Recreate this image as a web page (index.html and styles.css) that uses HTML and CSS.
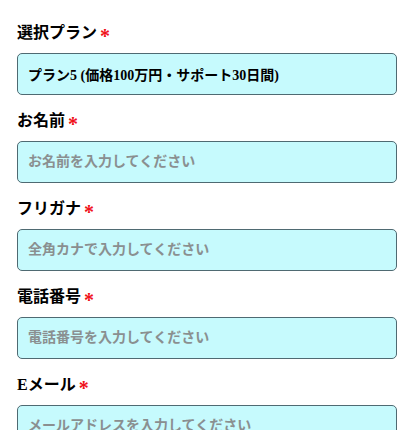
FILE: index.html
```html
<!DOCTYPE html>
<html lang="ja">
<head>
    <meta charset="UTF-8">
    <meta name="viewport" content="width=device-width, initial-scale=1.0">
    <title>お申し込みフォーム</title>
    <link rel="stylesheet" href="styles.css">
</head>
<body>
    <form class="entry-form">
        <div class="field">
            <label class="field-label" for="plan">選択プラン<span class="req">*</span></label>
            <div class="field-box field-value" id="plan">プラン5 (価格100万円・サポート30日間)</div>
        </div>

        <div class="field">
            <label class="field-label" for="name">お名前<span class="req">*</span></label>
            <input class="field-box" type="text" id="name" placeholder="お名前を入力してください">
        </div>

        <div class="field">
            <label class="field-label" for="kana">フリガナ<span class="req">*</span></label>
            <input class="field-box" type="text" id="kana" placeholder="全角カナで入力してください">
        </div>

        <div class="field">
            <label class="field-label" for="tel">電話番号<span class="req">*</span></label>
            <input class="field-box" type="tel" id="tel" placeholder="電話番号を入力してください">
        </div>

        <div class="field">
            <label class="field-label" for="email">Eメール<span class="req">*</span></label>
            <input class="field-box" type="email" id="email" placeholder="メールアドレスを入力してください">
        </div>
    </form>
</body>
</html>
```

FILE: styles.css
```css
body {
    margin: 0;
    padding: 23px 17px 0;
    font-family: "Liberation Serif", "Noto Sans CJK JP", serif;
    color: #000;
    background: #fff;
}
.entry-form {
    display: flex;
    flex-direction: column;
    gap: 16px;
}
.field {
    display: flex;
    flex-direction: column;
    gap: 10px;
}
.field-label {
    font-size: 16px;
    font-weight: bold;
    line-height: 20px;
}
.req {
    color: #f0101a;
    margin-left: 3px;
    font-size: 20px;
    line-height: 0;
    vertical-align: -5px;
}
.field-box {
    box-sizing: border-box;
    width: 100%;
    height: 42px;
    padding: 0 10px;
    border: 1px solid #4f6a72;
    border-radius: 5px;
    background: #c6fafd;
    font-family: inherit;
    font-size: 14px;
    font-weight: bold;
    color: #000;
}
.field-value {
    display: flex;
    align-items: center;
}
input.field-box::placeholder {
    color: #8a8f90;
}
```
